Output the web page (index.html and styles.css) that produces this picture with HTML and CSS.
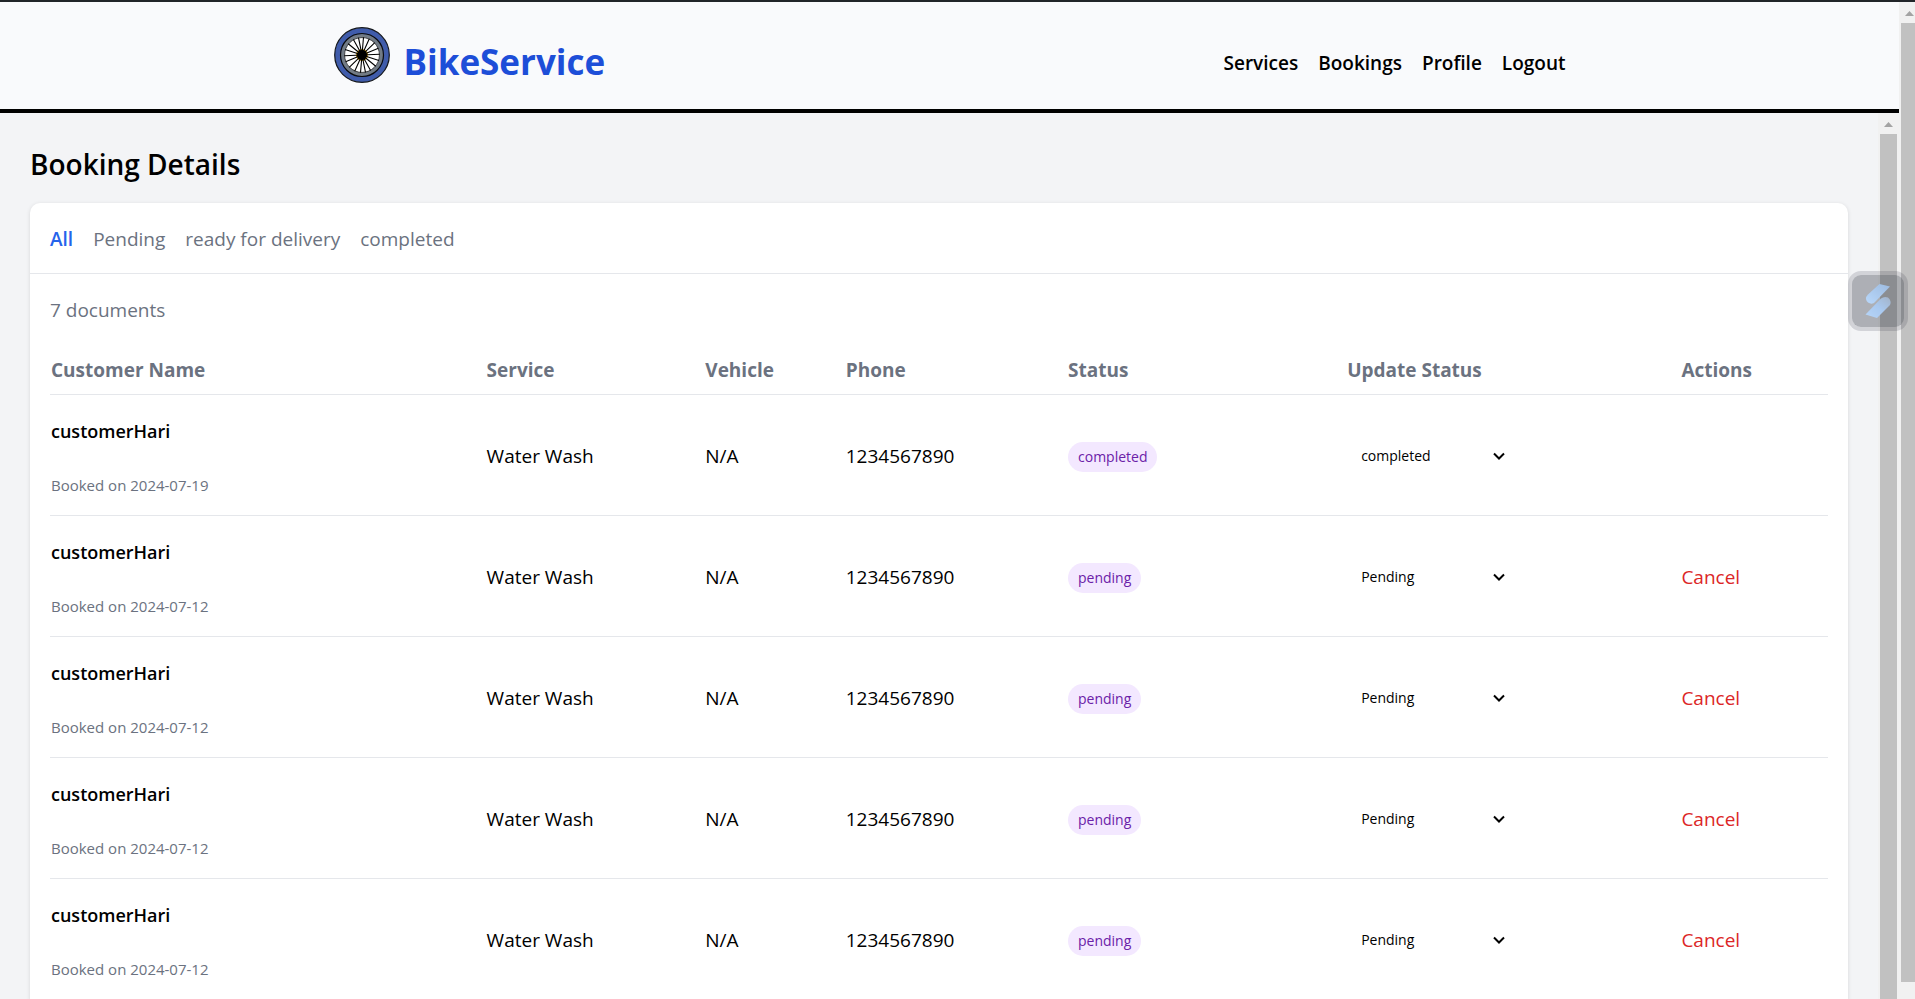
FILE: index.html
```html
<!DOCTYPE html>
<html lang="en">
<head>
<meta charset="utf-8">
<title>BikeService</title>
<link rel="stylesheet" href="styles.css">
</head>
<body>
<div class="strip"></div>
<div class="page">
  <div class="app">
    <header class="header">
      <div class="header-inner">
        <a class="brand" href="#">
          <svg class="wheel" viewBox="0 0 56 56" aria-hidden="true">
            <circle cx="28" cy="28" r="27.300" fill="#405cab" stroke="#14171c" stroke-width="1.200"/>
            <circle cx="28" cy="28" r="19.300" fill="#fff" stroke="#727b85" stroke-width="3.600"/>
            <circle cx="28" cy="28" r="21.500" fill="none" stroke="#0b0c0e" stroke-width="1.200"/>
            <circle cx="28" cy="28" r="17.400" fill="none" stroke="#0b0c0e" stroke-width=".7"/>
            <circle cx="28" cy="28" r="5.500" fill="#000" stroke="#c99a1c" stroke-width="1.200"/>
            <path stroke="#000" stroke-width="1.100" d="M29.500 10.300 26.500 45.700M35.300 11.800 20.700 44.200M40.800 15.700 15.200 40.300M44.400 21.300 11.600 34.700M45.700 27.200 10.300 28.800M44.900 33.500 11.100 22.500M41.800 39.200 14.200 16.800M36.600 43.500 19.400 12.500M31.500 45.300 24.500 10.700"/>
            <circle cx="28" cy="28" r="4.600" fill="#000"/>
          </svg>
          <span class="brand-name">BikeService</span>
        </a>
        <nav class="nav">
          <a href="#">Services</a>
          <a href="#">Bookings</a>
          <a href="#">Profile</a>
          <a href="#">Logout</a>
        </nav>
      </div>
    </header>
    <div class="body-row">
      <main class="main">
        <h1 class="title">Booking Details</h1>
        <section class="card">
          <div class="tabs">
            <button class="tab tab-active" type="button">All</button>
            <button class="tab" type="button">Pending</button>
            <button class="tab" type="button">ready for delivery</button>
            <button class="tab" type="button">completed</button>
          </div>
          <div class="card-body">
            <p class="count">7 documents</p>
            <table class="table">
              <colgroup>
                <col class="c-name"><col class="c-service"><col class="c-vehicle"><col class="c-phone"><col class="c-status"><col class="c-update"><col>
              </colgroup>
              <thead>
                <tr><th>Customer Name</th><th>Service</th><th>Vehicle</th><th>Phone</th><th>Status</th><th>Update Status</th><th>Actions</th></tr>
              </thead>
              <tbody>
                <tr>
                  <td><div class="name">customerHari</div><div class="booked">Booked on 2024-07-19</div></td>
                  <td>Water Wash</td><td>N/A</td><td>1234567890</td>
                  <td><span class="badge">completed</span></td>
                  <td><div class="picker"><select aria-label="Update status"><option>completed</option><option>Pending</option></select><svg class="chevron" viewBox="0 0 12 8" aria-hidden="true"><path d="M1 1.500 6 6.500 11 1.500"/></svg></div></td>
                  <td></td>
                </tr>
                <tr>
                  <td><div class="name">customerHari</div><div class="booked">Booked on 2024-07-12</div></td>
                  <td>Water Wash</td><td>N/A</td><td>1234567890</td>
                  <td><span class="badge">pending</span></td>
                  <td><div class="picker"><select aria-label="Update status"><option>Pending</option><option>completed</option></select><svg class="chevron" viewBox="0 0 12 8" aria-hidden="true"><path d="M1 1.500 6 6.500 11 1.500"/></svg></div></td>
                  <td><button class="cancel" type="button">Cancel</button></td>
                </tr>
                <tr>
                  <td><div class="name">customerHari</div><div class="booked">Booked on 2024-07-12</div></td>
                  <td>Water Wash</td><td>N/A</td><td>1234567890</td>
                  <td><span class="badge">pending</span></td>
                  <td><div class="picker"><select aria-label="Update status"><option>Pending</option><option>completed</option></select><svg class="chevron" viewBox="0 0 12 8" aria-hidden="true"><path d="M1 1.500 6 6.500 11 1.500"/></svg></div></td>
                  <td><button class="cancel" type="button">Cancel</button></td>
                </tr>
                <tr>
                  <td><div class="name">customerHari</div><div class="booked">Booked on 2024-07-12</div></td>
                  <td>Water Wash</td><td>N/A</td><td>1234567890</td>
                  <td><span class="badge">pending</span></td>
                  <td><div class="picker"><select aria-label="Update status"><option>Pending</option><option>completed</option></select><svg class="chevron" viewBox="0 0 12 8" aria-hidden="true"><path d="M1 1.500 6 6.500 11 1.500"/></svg></div></td>
                  <td><button class="cancel" type="button">Cancel</button></td>
                </tr>
                <tr>
                  <td><div class="name">customerHari</div><div class="booked">Booked on 2024-07-12</div></td>
                  <td>Water Wash</td><td>N/A</td><td>1234567890</td>
                  <td><span class="badge">pending</span></td>
                  <td><div class="picker"><select aria-label="Update status"><option>Pending</option><option>completed</option></select><svg class="chevron" viewBox="0 0 12 8" aria-hidden="true"><path d="M1 1.500 6 6.500 11 1.500"/></svg></div></td>
                  <td><button class="cancel" type="button">Cancel</button></td>
                </tr>
              </tbody>
            </table>
          </div>
        </section>
      </main>
      <div class="scroll scroll-inner" aria-hidden="true">
        <svg class="arrow" viewBox="0 0 21 21"><path d="M6 14h9l-4.500-5z"/></svg>
        <div class="thumb"></div>
      </div>
    </div>
  </div>
  <div class="scroll scroll-outer" aria-hidden="true">
    <svg class="arrow" viewBox="0 0 21 21"><path d="M6 14h9l-4.500-5z"/></svg>
    <div class="thumb"></div>
  </div>
</div>
<button class="widget" type="button" aria-label="Open assistant">
  <svg viewBox="0 0 52 52" aria-hidden="true">
    <defs>
      <linearGradient id="g1" x1="1" y1="0" x2="0" y2="1"><stop offset="0" stop-color="#9dbbe0"/><stop offset="1" stop-color="#b9d8fb"/></linearGradient>
      <linearGradient id="g2" x1="1" y1="0" x2="0" y2="1"><stop offset="0" stop-color="#a3b3c8"/><stop offset=".5" stop-color="#a9c9f0"/><stop offset="1" stop-color="#b7d5f8"/></linearGradient>
    </defs>
    <path d="M27.500 9 38 11.500 22 28Q19 29.500 16 27.500 12 23.500 16 19.500z" fill="url(#g1)"/>
    <path d="M25 43 13.500 39.500 29 23.500Q32 21 36 22.500 40 26 38 30z" fill="url(#g2)"/>
  </svg>
</button>
</body>
</html>
```
FILE: styles.css
```css
* { box-sizing: border-box; }

body {
  margin: 0;
  height: 100vh;
  display: flex;
  flex-direction: column;
  overflow: hidden;
  background: #f3f4f6;
  color: #000;
  font-family: "Open Sans", "Noto Sans", sans-serif;
  font-size: 19px;
  line-height: 30px;
}

a { color: inherit; text-decoration: none; }

button {
  padding: 0;
  border: 0;
  background: none;
  color: inherit;
  font: inherit;
  cursor: pointer;
}

.strip { flex: none; height: 2px; background: #212529; }

.page { flex: 1; min-height: 0; display: flex; }

.app { flex: 1; min-width: 0; display: flex; flex-direction: column; }

.header {
  flex: none;
  background: #f9fafc;
  border-bottom: 4px solid #000;
}

.header-inner {
  display: flex;
  justify-content: space-between;
  align-items: flex-start;
  max-width: 1232px;
  margin: 0 auto;
  padding: 25px 0 22px;
}

.brand { display: flex; align-items: flex-start; gap: 14px; }

.wheel { width: 56px; height: 56px; }

.brand-name {
  padding-top: 10px;
  color: #1d4ed8;
  font-size: 35px;
  font-weight: 700;
  line-height: 50px;
}

.nav {
  display: flex;
  gap: 20px;
  padding-top: 21px;
  font-weight: 600;
}

.body-row { flex: 1; min-height: 0; display: flex; }

.main {
  flex: 1;
  min-width: 0;
  display: flex;
  flex-direction: column;
  padding: 31px 30px 0;
}

.title {
  flex: none;
  margin: 0 0 19px;
  font-size: 28px;
  font-weight: 600;
  line-height: 40px;
}

.card {
  flex: 1 0 auto;
  background: #fff;
  border-radius: 10px 10px 0 0;
  box-shadow: 0 1px 4px rgba(0, 0, 0, .12);
}

.tabs {
  display: flex;
  gap: 20px;
  padding: 21px 20px 19px;
  border-bottom: 1px solid #e5e7eb;
  color: #6b7280;
}

.tab-active { color: #2563eb; font-weight: 600; }

.card-body { padding: 21px 20px 0; }

.count { margin: 0 0 19px; color: #6b7280; }

.table {
  width: 100%;
  table-layout: fixed;
  border-collapse: collapse;
}

.c-name { width: 24.5%; }
.c-service { width: 12.3%; }
.c-vehicle { width: 7.9%; }
.c-phone { width: 12.5%; }
.c-status { width: 15.7%; }
.c-update { width: 18.8%; }

.table th {
  padding: 11px 1px 9px;
  color: #6b7280;
  font-weight: 700;
  text-align: left;
}

.table tr { border-bottom: 1px solid #e5e7eb; }

.table td { padding: 21px 1px 19px; }

.name {
  margin-bottom: 29px;
  font-size: 18px;
  font-weight: 600;
  line-height: 30px;
}

.booked {
  margin-bottom: 1px;
  color: #6b7280;
  font-size: 15px;
  line-height: 20px;
}

.badge {
  display: inline-block;
  padding: 5px 10px;
  border-radius: 15px;
  background: #f3e8ff;
  color: #6b21a8;
  font-size: 14px;
  line-height: 20px;
  vertical-align: middle;
}

.picker { display: grid; width: 170px; align-items: center; }

.picker select {
  grid-area: 1 / 1;
  appearance: none;
  padding: 10px 14px;
  border: 0;
  background: transparent;
  color: #000;
  font: inherit;
  font-size: 14px;
  line-height: 20px;
}

.chevron {
  grid-area: 1 / 1;
  justify-self: end;
  width: 12px;
  height: 8px;
  margin-right: 12px;
  fill: none;
  stroke: #000;
  stroke-width: 2;
  pointer-events: none;
}

.cancel { color: #dc2626; }

.scroll {
  flex: none;
  display: flex;
  flex-direction: column;
  background: #f1f1f1;
}

.scroll-inner { width: 21px; }

.scroll-outer { width: 16px; overflow: hidden; padding-bottom: 17px; }

.arrow { flex: none; width: 21px; height: 21px; fill: #a3a3a3; }

.thumb { flex: 1; width: 17px; margin-left: 2px; background: #c1c1c1; }

.widget {
  position: fixed;
  top: 271px;
  right: 7px;
  width: 60px;
  height: 60px;
  border: 4px solid rgba(25, 30, 45, .15);
  border-radius: 13px;
  background: rgba(25, 30, 45, .32);
  background-clip: padding-box;
}

.widget svg { display: block; width: 52px; height: 52px; }
```
